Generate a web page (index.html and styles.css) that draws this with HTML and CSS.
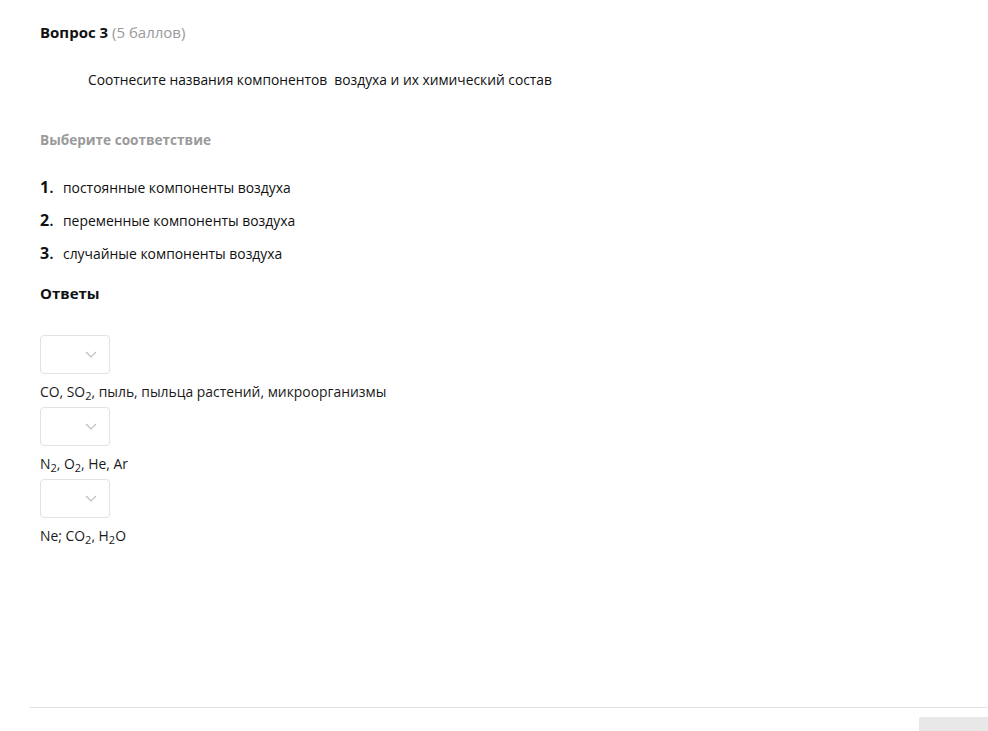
FILE: index.html
```html
<!DOCTYPE html>
<html lang="ru">
<head>
<meta charset="utf-8">
<link rel="stylesheet" href="styles.css">
</head>
<body>
<div class="page">
  <div class="question">
    <h2 class="q-title">Вопрос 3 <span class="q-points">(5 баллов)</span></h2>
    <p class="q-text">Соотнесите названия компонентов&nbsp; воздуха и их химический состав</p>
    <h3 class="q-hint">Выберите соответствие</h3>
    <ol class="options">
      <li class="option"><span class="num">1<span class="dot">.</span></span><span class="opt-text">постоянные компоненты воздуха</span></li>
      <li class="option"><span class="num">2<span class="dot">.</span></span><span class="opt-text">переменные компоненты воздуха</span></li>
      <li class="option"><span class="num">3<span class="dot">.</span></span><span class="opt-text">случайные компоненты воздуха</span></li>
    </ol>
    <h3 class="answers-title">Ответы</h3>
    <div class="answers">
      <div class="answer">
        <div class="select"><svg class="chev" viewBox="0 0 12 7" width="12" height="7"><path d="M1 1l5 5 5-5" fill="none" stroke="#bdbdbd" stroke-width="1.2"/></svg></div>
        <div class="ans-text">CO, SO<sub>2</sub>, пыль, пыльца растений, микроорганизмы</div>
      </div>
      <div class="answer">
        <div class="select"><svg class="chev" viewBox="0 0 12 7" width="12" height="7"><path d="M1 1l5 5 5-5" fill="none" stroke="#bdbdbd" stroke-width="1.2"/></svg></div>
        <div class="ans-text">N<sub>2</sub>, O<sub>2</sub>, He, Ar</div>
      </div>
      <div class="answer">
        <div class="select"><svg class="chev" viewBox="0 0 12 7" width="12" height="7"><path d="M1 1l5 5 5-5" fill="none" stroke="#bdbdbd" stroke-width="1.2"/></svg></div>
        <div class="ans-text">Ne; CO<sub>2</sub>, H<sub>2</sub>O</div>
      </div>
    </div>
  </div>
  <div class="footer">
    <div class="footer-btn"></div>
  </div>
</div>
</body>
</html>
```

FILE: styles.css
```css
* { box-sizing: border-box; }
html, body { margin: 0; padding: 0; background: #fff; }
body {
  font-family: "Open Sans", "Liberation Sans", sans-serif;
  color: #1a1a1a;
  height: 731px;
  overflow: hidden;
}
.page {
  height: 731px;
  display: flex;
  flex-direction: column;
}
.question {
  padding: 22px 0 0 40px;
  flex: 1;
}
.q-title {
  margin: 0;
  font-size: 15px;
  font-weight: 700;
  line-height: 20px;
  color: #111;
}
.q-points {
  font-weight: 400;
  color: #9a9a9a;
}
.q-text {
  margin: 28px 0 0 48px;
  font-size: 13.8px;
  line-height: 20px;
  color: #111;
}
.q-hint {
  margin: 40px 0 0;
  font-size: 13.6px;
  font-weight: 700;
  line-height: 20px;
  color: #9a9a9a;
}
.options {
  list-style: none;
  margin: 27px 0 0;
  padding: 0;
  display: flex;
  flex-direction: column;
  gap: 12px;
}
.option {
  display: flex;
  align-items: baseline;
  line-height: 21px;
}
.num {
  font-size: 16px;
  font-weight: 700;
  width: 23px;
  color: #111;
}
.dot { font-weight: 600; }
.opt-text {
  font-size: 13.9px;
  color: #111;
}
.answers-title {
  margin: 19px 0 0;
  font-size: 15px;
  font-weight: 700;
  line-height: 20px;
  color: #111;
}
.answers {
  margin-top: 32px;
  display: flex;
  flex-direction: column;
  gap: 5px;
}
.answer {
  display: flex;
  flex-direction: column;
}
.select {
  width: 70px;
  height: 39px;
  border: 1px solid #e2e2e2;
  border-radius: 4px;
  display: flex;
  align-items: center;
  justify-content: flex-end;
  padding-right: 12px;
}
.chev { display: block; }
.ans-text {
  margin-top: 8px;
  font-size: 13.9px;
  line-height: 20px;
  color: #1a1a1a;
}
.ans-text sub {
  font-size: 11px;
  vertical-align: -3px;
  line-height: 0;
}
.footer {
  margin-left: 30px;
  height: 24px;
  border-top: 1px solid #e3e3e3;
  display: flex;
  justify-content: flex-end;
  align-items: flex-end;
}
.footer-btn {
  width: 69px;
  height: 14px;
  background: #e8e8e8;
  border-radius: 2px 0 0 0;
}
```
